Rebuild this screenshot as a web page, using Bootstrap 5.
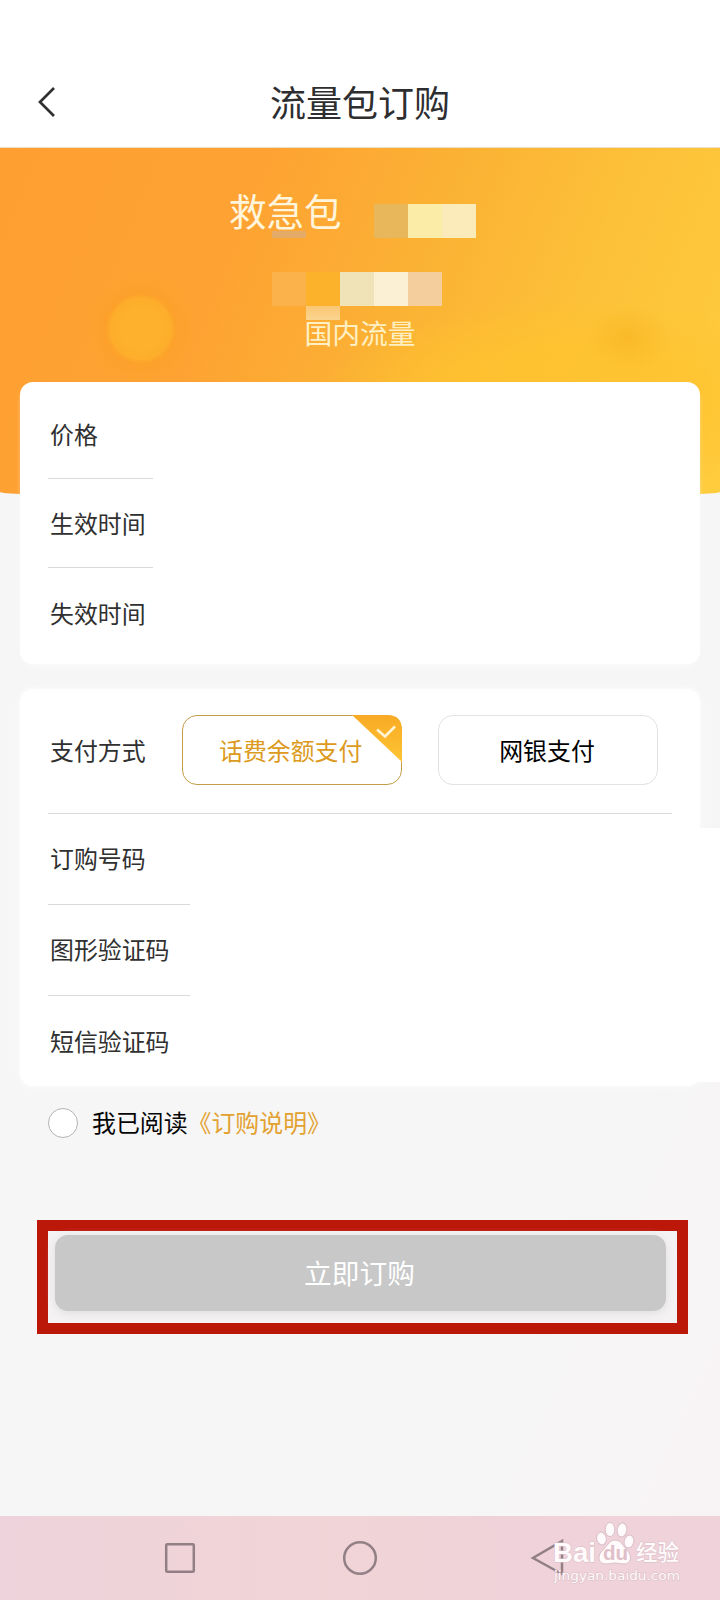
<!DOCTYPE html>
<html lang="zh-CN">
<head>
<meta charset="utf-8">
<meta name="viewport" content="width=device-width, initial-scale=1">
<title>流量包订购</title>
<link href="https://cdn.jsdelivr.net/npm/bootstrap@5.3.0/dist/css/bootstrap.min.css" rel="stylesheet">
<style>
  body { font-family: "Liberation Sans", "Noto Sans CJK SC", sans-serif; font-size: 23.9px; line-height: 36px; color: #303030; background: #f6f6f6; }
  .screen { width: 720px; height: 1600px; background: linear-gradient(115deg, #f6f6f6 75%, #f8f4f5 95%); }
  .topbar { height: 148px; padding: 62px 36px 0; border-bottom: 1px solid #f0dfc4; }
  .topbar h1 { font-size: 36px; line-height: 86px; font-weight: 400; color: #2e2e30; }
  .topbar .spacer, .back { width: 20px; }
  .hero { height: 350px; color: #fff5dc; border-radius: 0 0 50% 50% / 0 0 6px 6px;
    background:
      radial-gradient(circle at 141px 181px, #fdb12c 0 20px, #fdae2b 30px, rgba(251,160,36,.55) 35px, transparent 54px),
      radial-gradient(ellipse 42px 32px at 628px 190px, rgba(246,178,31,.55), transparent),
      radial-gradient(ellipse 250px 100px at 570px 250px, rgba(255,195,45,.7) 0 50%, transparent),
      linear-gradient(112deg, #fe9f32 0, #fea333 32%, #fbb234 54%, #fdc139 76%, #fecd3e 100%); }
  .hero-title { font-size: 37.5px; line-height: 56px; margin-left: 229px; padding-top: 37px; }
  .mosaic { display: grid; grid-template-columns: repeat(6, 34px); width: 204px; margin-left: 272px; }
  .mosaic i { height: 34px; }
  .mosaic .stub { height: 14px; background: linear-gradient(#fac774, #fbd58f); }
  .mosaic .smudge { height: 7px; align-self: end; background: #e3ab67; }
  .hero-top .mosaic { position: absolute; top: 56px; left: 0; }
  .hero-top { height: 124px; }
  .hero-sub { font-size: 27.8px; line-height: 34px; margin-top: -20px; color: #fff0c4; }
  .panel { width: 680px; margin-left: 20px; background: #fff; border-radius: 13px; padding: 0 28px; }
  .detail-panel { height: 282px; margin-top: -116px; padding-top: 8px; box-shadow: 0 4px 6px -3px #fdfdfd; }
  .detail-panel .line-item { height: 89px; width: 105px; padding-top: 4px; }
  .line-item { padding-left: 2px; padding-top: 2px; white-space: nowrap; border-bottom: 1px solid #d9d9d9; display: flex; align-items: center; }
  .line-item:last-child { border-bottom: 0; }
  .order-panel { height: 397px; margin-top: 25px; box-shadow: 0 0 7px #fdfdfd; }
  .pay-row { height: 125px; width: 624px; padding-left: 2px; padding-bottom: 2px; border-bottom: 1px solid #d9d9d9; }
  .pay-row > span { width: 132px; padding-top: 3px; }
  .order-panel .line-item { height: 91px; width: 142px; }
  .pay { width: 220px; height: 70px; border-radius: 15px; border: 1px solid #e2e2e2; font-size: 23.9px; color: #000; background: #fff; padding: 4px 2px 0 0; }
  .pay.chosen { border-color: #c49e49; color: #dc9a20; margin-right: 36px; text-align: left; padding-left: 36px; }
  .tick { top: -1px; right: -1px; }
  .blank-area { position: absolute; left: 170px; top: 139px; width: 530px; height: 254px; background: #fff; }
  .consent { margin: 18px 0 0 48px; color: #050505; }
  .consent > :not(.ring) { padding-top: 2px; }
  .ring { width: 30px; height: 30px; border: 1px solid #b4b4b4; border-radius: 50%; background: #fff; margin-right: 14px; }
  .consent a { color: #e3a130; text-decoration: none; }
  .callout { width: 651px; height: 114px; margin: 78px 0 0 37px; border: 11px solid #bb180a; padding: 4px 12px 14px 7px; background: #f4f2f2; }
  .submit { height: 76px; width: 611px; border: 0; border-radius: 13px; background: #c8c8c8; color: #fff; font-size: 27.7px; padding: 4px 2px 0 0; box-shadow: 0 2px 8px #dedede; }
  .submit:disabled { opacity: 1; background: #c8c8c8; color: #fff; }
  .sysbar { height: 84px; background: linear-gradient(90deg, #eed3dc, #f0d4d6 45%, #efd2da 75%); }
</style>
</head>
<body>
<main class="screen d-flex flex-column overflow-hidden position-relative">
  <header class="topbar bg-white d-flex justify-content-between flex-shrink-0">
    <svg class="back" width="20" height="84" viewBox="0 0 20 84" fill="none" stroke="#303033" stroke-width="2.7"><path d="M18 26 4 40 18 54"/></svg>
    <h1 class="m-0">流量包订购</h1>
    <span class="spacer"></span>
  </header>

  <section class="hero flex-shrink-0">
    <div class="hero-top position-relative">
      <div class="mosaic">
        <i class="smudge"></i><i></i><i></i><i style="background:#e9b75b"></i><i style="background:#fbeda8"></i><i style="background:#fcebba"></i>
      </div>
      <div class="hero-title position-relative">救急包</div>
    </div>
    <div class="mosaic">
      <i style="background:#fbb24a"></i><i style="background:#fdb22b"></i><i style="background:#f0e3b7"></i><i style="background:#fbf0d4"></i><i style="background:#f4ce9c"></i><i></i>
      <i style="height:14px"></i><i class="stub"></i>
    </div>
    <div class="hero-sub text-center position-relative" style="margin-top:-2px">国内流量</div>
  </section>

  <section class="panel detail-panel flex-shrink-0 position-relative">
    <div class="line-item">价格</div>
    <div class="line-item">生效时间</div>
    <div class="line-item">失效时间</div>
  </section>

  <section class="panel order-panel flex-shrink-0 position-relative">
    <div class="blank-area"></div>
    <div class="pay-row d-flex align-items-center">
      <span>支付方式</span>
      <button class="pay chosen position-relative">话费余额支付
        <svg class="tick position-absolute" width="50" height="47" viewBox="0 0 50 47"><defs><linearGradient id="gold" x2="0" y2="1"><stop stop-color="#f9aa25"/><stop offset="1" stop-color="#fdc534"/></linearGradient></defs><path d="M0 0H35Q50 0 50 15V47Z" fill="url(#gold)"/><path d="m25 14.500 8 7 10-10" fill="none" stroke="#fff4d5" stroke-width="2.6"/></svg>
      </button>
      <button class="pay">网银支付</button>
    </div>
    <div class="position-relative">
      <div class="line-item">订购号码</div>
      <div class="line-item">图形验证码</div>
      <div class="line-item">短信验证码</div>
    </div>
  </section>

  <div class="consent d-flex align-items-center flex-shrink-0">
    <span class="ring"></span><span>我已阅读</span><a href="#">《订购说明》</a>
  </div>

  <div class="callout flex-shrink-0"><button class="submit" disabled>立即订购</button></div>

  <footer class="sysbar mt-auto flex-shrink-0">
    <svg width="720" height="84" viewBox="0 0 720 84">
      <g fill="none" stroke="#928086" stroke-width="2.5">
        <rect x="166.2" y="28.2" width="27.6" height="27.6" rx="1"/>
        <circle cx="360" cy="42" r="15.8"/>
        <path d="M562 25 533 42 562 58Z"/>
      </g>
      <g fill="#fffafb" stroke="#dabfc7" stroke-width="1">
        <ellipse cx="601.5" cy="22.500" rx="4.800" ry="6.500" transform="rotate(-12 601.5 22.5)"/>
        <ellipse cx="610" cy="13.5" rx="4.8" ry="7"/>
        <ellipse cx="622" cy="14" rx="4.8" ry="7" transform="rotate(8 622 14)"/>
        <ellipse cx="629" cy="25.500" rx="4.800" ry="6.500" transform="rotate(14 629 25.5)"/>
        <path d="M615 24c6 0 8 6 12 10 6 6 4 14-3 14-4 0-6-1-9-1s-5 1-9 1c-8 0-9-8-4-13 5-4 7-11 13-11Z"/>
        <g font-family="Liberation Sans, Noto Sans CJK SC, sans-serif" paint-order="stroke">
          <text x="553" y="46" font-size="27" font-weight="700" textLength="43" lengthAdjust="spacingAndGlyphs">Bai</text>
          <text x="636" y="44" font-size="21.500" font-weight="500" textLength="43">经验</text>
          <text x="554" y="63.500" font-size="13" textLength="126" lengthAdjust="spacingAndGlyphs" style="font-family:'DejaVu Sans',sans-serif">jingyan.baidu.com</text>
        </g>
      </g>
      <text x="603" y="44" font-size="20" font-weight="700" fill="#dfbfc8" textLength="25" lengthAdjust="spacingAndGlyphs" style="font-family:'Liberation Sans',sans-serif">du</text>
    </svg>
  </footer>
</main>
<script src="https://cdn.jsdelivr.net/npm/bootstrap@5.3.0/dist/js/bootstrap.bundle.min.js"></script>
</body>
</html>
